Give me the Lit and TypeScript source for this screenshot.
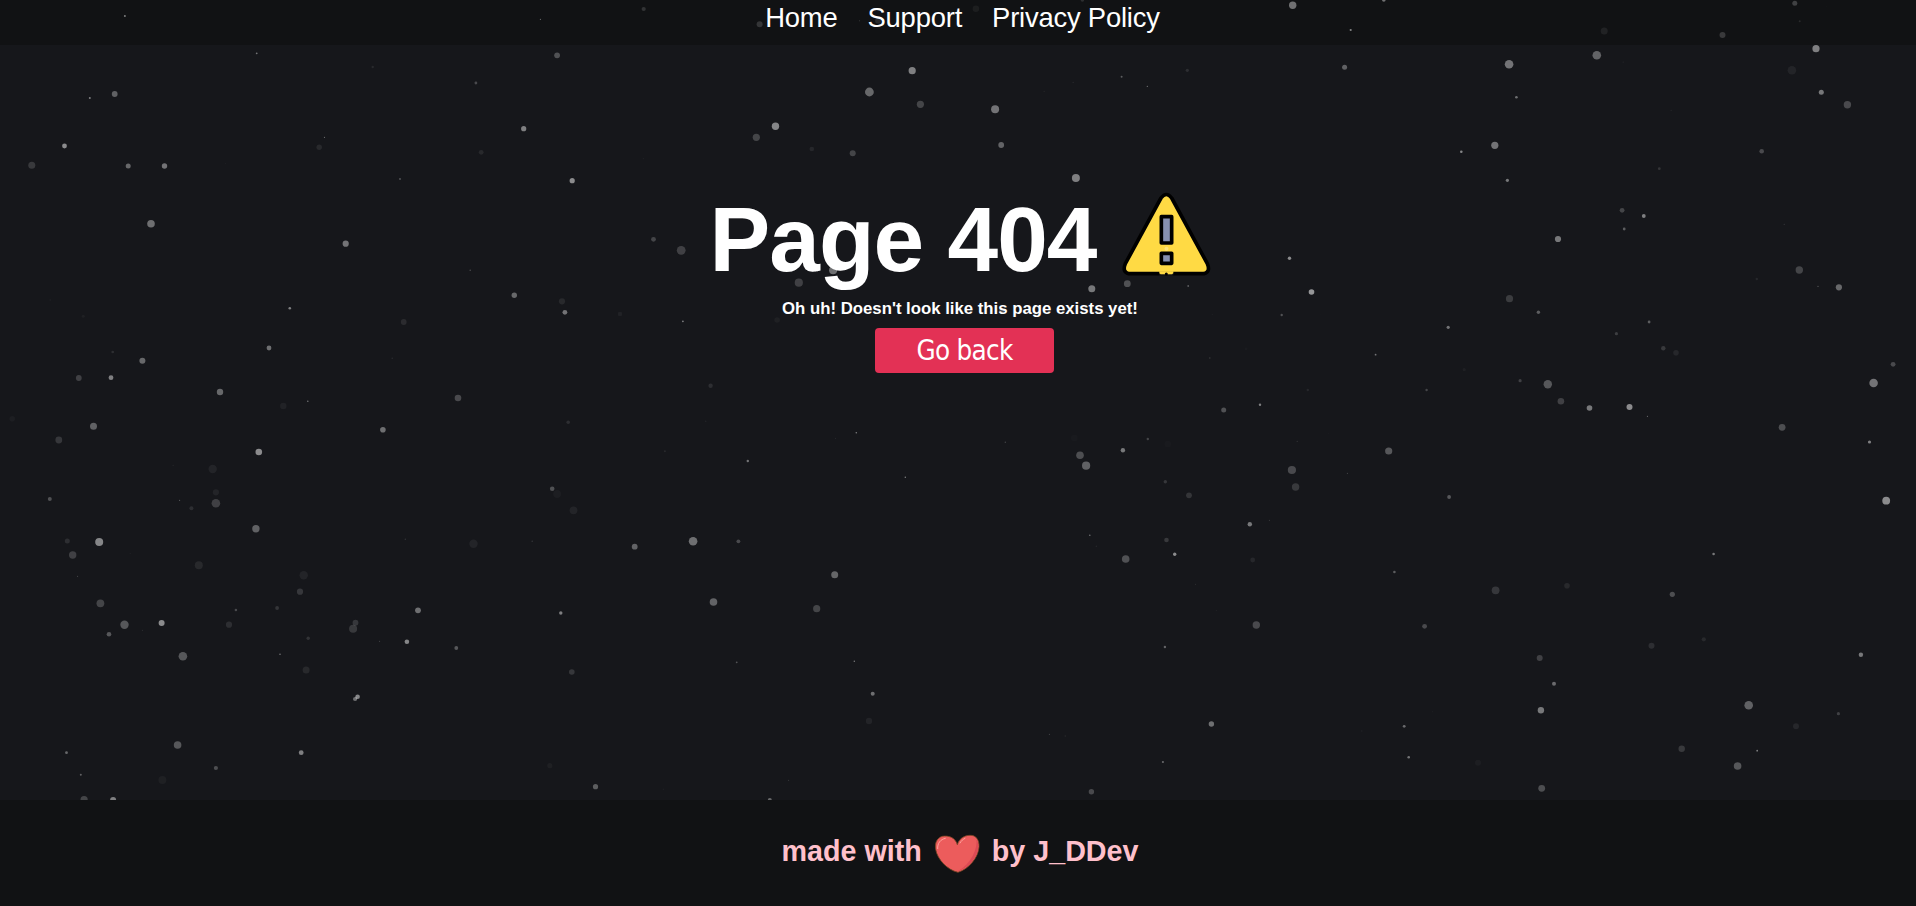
import { LitElement, html, svg, css } from "lit";
import { customElement } from "lit/decorators.js";

/** x and y in sector units, radius in px, opacity in percent. */
type Star = [number, number, number, number];

/** The sky is stored in six sectors, each with its own origin in px. */
interface Sector {
  x: number;
  y: number;
  stars: Star[];
}

const UNIT_X = 2.45;
const UNIT_Y = 3;

const SECTORS: Sector[] = [
  {
    x: 0,
    y: 0,
    stars: [
      [306, 48, 1, 45], [1324, 58, 0.6, 40], [629, 160, 0.9, 40], [913, 201, 1.2, 8], [1365, 166, 2.9, 25],
      [1166, 249, 1.4, 22], [281, 282, 2.9, 32], [220, 294, 1, 45], [1283, 386, 2.6, 45], [158, 438, 2.4, 50],
      [795, 412, 0.6, 40], [782, 442, 2.7, 8], [1179, 457, 2.4, 8], [78, 496, 3.5, 15], [314, 498, 2.5, 35],
      [403, 498, 2.7, 40], [553, 490, 0.6, 4], [980, 537, 0.9, 28], [1402, 542, 2.6, 50], [370, 671, 3.8, 38],
      [847, 731, 3.1, 40], [1152, 811, 0.7, 25], [123, 900, 0.9, 3], [204, 949, 1.5, 4], [710, 925, 1.3, 45],
      [1260, 886, 2.7, 35], [1377, 904, 3.1, 8], [1384, 937, 2.4, 40], [1519, 942, 2.2, 5], [989, 966, 2.9, 9],
      [659, 1044, 2.4, 38], [276, 1056, 1.3, 10], [349, 1082, 3, 35], [961, 1075, 0.7, 10], [193, 1134, 2.9, 18],
      [272, 1133, 2.4, 45], [539, 1176, 3.2, 35], [1122, 1194, 3.3, 22],
    ],
  },
  {
    x: 640,
    y: 0,
    stars: [
      [9, 27, 2.1, 14], [293, 73, 3, 15], [823, 26, 3.3, 5], [538, 62, 0.5, 20], [583, 62, 2.9, 10],
      [1084, 0, 1.8, 12], [667, 212, 3.6, 45], [562, 276, 4.4, 35], [687, 313, 3.6, 20], [870, 328, 4, 40],
      [332, 379, 3.7, 48], [285, 412, 3.6, 20], [421, 447, 2.3, 7], [521, 460, 3, 20], [885, 435, 2.9, 33],
      [1341, 211, 1.6, 10], [1180, 230, 1, 30], [1243, 259, 0.6, 45], [1061, 247, 0.5, 14], [990, 274, 0.5, 10],
      [1068, 534, 4, 45], [33, 718, 2.4, 20], [101, 751, 4.4, 18], [389, 848, 4.1, 18], [473, 811, 4, 38],
      [1107, 866, 3.5, 42], [1194, 851, 3.4, 25], [1343, 858, 0.9, 30], [1290, 746, 2, 30], [105, 964, 0.9, 45],
      [336, 960, 2.8, 4], [8, 476, 0.6, 5], [1402, 943, 0.5, 6], [1485, 1046, 1.5, 2], [1396, 1074, 0.8, 15],
      [173, 1157, 2.2, 10], [886, 932, 2.5, 25],
    ],
  },
  {
    x: 1276,
    y: 0,
    stars: [
      [41, 16, 3.7, 40], [264, 0, 1.8, 40], [183, 90, 1.1, 48], [804, 93, 3.5, 7], [1094, 105, 3, 17],
      [1271, 10, 2.5, 20], [1283, 64, 1, 10], [1348, 20, 0.5, 3], [571, 193, 4.3, 40], [786, 166, 4.3, 33],
      [1323, 146, 3.6, 45], [168, 202, 2.5, 32], [851, 187, 1, 3], [1264, 211, 4.3, 6], [589, 292, 1.3, 38],
      [1336, 277, 2.5, 42], [1400, 314, 3.7, 22], [968, 331, 0.5, 10], [536, 436, 3.6, 40], [454, 455, 1.3, 48],
      [1190, 454, 2.3, 22], [939, 506, 1.4, 13], [567, 541, 1.6, 42], [848, 631, 2.4, 20], [901, 648, 1.9, 45],
      [853, 687, 1.4, 30], [691, 717, 3.1, 42], [1245, 673, 0.5, 20], [33, 775, 1.7, 50], [1282, 810, 3.7, 20],
      [1178, 837, 1.2, 7], [1328, 859, 0.5, 45], [1379, 862, 3.1, 35], [87, 876, 2.8, 55], [572, 896, 3.6, 16],
      [643, 937, 1.7, 30], [14, 945, 1.2, 25], [110, 942, 0.6, 3], [422, 982, 1.6, 40], [914, 966, 1.4, 30],
      [834, 1001, 1.6, 17], [244, 1064, 0.9, 40], [949, 1045, 2.2, 15], [980, 1058, 2.8, 7], [461, 1109, 1.6, 4],
      [1512, 1093, 2.4, 22], [1464, 1149, 4.3, 40], [666, 1153, 4.2, 28], [598, 1142, 1.6, 18], [78, 1170, 1.2, 7],
      [369, 1170, 1.2, 20],
    ],
  },
  {
    x: 0,
    y: 400,
    stars: [
      [754, 4, 0.8, 40], [694, 18, 3.2, 5], [30, 56, 2.8, 3], [229, 79, 3.5, 32], [144, 120, 3.4, 14],
      [938, 89, 2.8, 38], [1392, 67, 1.8, 10], [634, 156, 3.3, 50], [521, 207, 4.2, 6], [424, 196, 0.5, 10],
      [529, 277, 3.1, 6], [529, 310, 4.3, 18], [469, 325, 2, 10], [440, 301, 0.6, 30], [122, 297, 2, 25],
      [1353, 266, 2.3, 25], [1365, 282, 3.9, 3], [1405, 331, 3.9, 6], [627, 386, 3.7, 32], [243, 426, 4, 48],
      [165, 423, 2.5, 10], [178, 465, 3.7, 18], [319, 460, 0.6, 5], [190, 529, 0.5, 28], [993, 418, 0.7, 13],
      [1160, 431, 4.2, 6], [1304, 424, 0.8, 13], [1555, 440, 2.9, 33], [487, 496, 4, 8], [744, 526, 4.2, 6],
      [735, 575, 3.1, 14], [679, 624, 1.9, 13], [246, 610, 3.9, 20], [578, 630, 1.3, 22], [561, 674, 3.1, 10],
      [305, 674, 4.2, 28], [396, 669, 3, 50], [349, 691, 0.6, 10], [267, 703, 2.3, 28], [871, 668, 2.9, 14],
      [865, 686, 4, 15], [1024, 631, 2.9, 38], [1374, 639, 1.7, 45], [997, 725, 2.3, 48], [930, 724, 0.5, 25],
      [1118, 744, 1.9, 28], [755, 715, 1.7, 12], [686, 763, 0.8, 40], [448, 769, 4.3, 28], [750, 810, 3.5, 8],
      [1401, 816, 2.8, 14], [876, 890, 2.3, 48], [870, 897, 2.1, 38], [435, 1035, 3.8, 28], [163, 1058, 1.4, 35],
      [738, 1058, 2.4, 45], [529, 1104, 2.1, 24], [198, 1124, 1, 32], [398, 1140, 4, 4], [1347, 1097, 2.6, 4],
      [1459, 1160, 2.6, 30], [206, 1199, 3.6, 20], [277, 1200, 3, 45],
    ],
  },
  {
    x: 640,
    y: 400,
    stars: [
      [1430, 30, 2.5, 25], [1519, 14, 1.2, 45], [161, 64, 0.8, 6], [479, 115, 0.5, 10], [61, 154, 1, 8],
      [264, 183, 1.2, 40], [530, 98, 0.8, 45], [650, 232, 0.7, 48], [895, 127, 0.7, 20], [1064, 114, 3.5, 1.5],
      [1293, 132, 3.5, 1.5], [1244, 117, 1.2, 20], [1183, 151, 2.2, 42], [1078, 166, 3.8, 24], [1093, 197, 4.1, 32],
      [1287, 245, 1.7, 14], [1345, 286, 2.9, 13], [1494, 373, 2.2, 42], [1542, 361, 0.6, 15], [1102, 406, 0.8, 40],
      [1290, 420, 2.3, 15], [1118, 439, 0.7, 8], [1310, 463, 1.7, 50], [1190, 477, 3.8, 25], [1501, 480, 2.4, 7],
      [130, 424, 4.3, 38], [241, 424, 1.9, 22], [477, 524, 3.5, 34], [180, 606, 3.8, 33], [433, 626, 3.6, 20],
      [1361, 553, 0.5, 12], [1412, 631, 0.6, 6], [1510, 675, 3.7, 22], [1286, 741, 1.2, 33], [237, 787, 0.9, 26],
      [525, 784, 0.7, 45], [570, 881, 2, 38], [561, 963, 3.2, 6], [1400, 972, 2.7, 38], [1003, 1003, 0.6, 20],
      [1042, 1008, 0.8, 7], [1281, 1086, 1.1, 35], [364, 1141, 0.6, 14], [57, 1168, 0.7, 4], [318, 1200, 2, 35],
      [1106, 1175, 2.7, 22],
    ],
  },
  {
    x: 1276,
    y: 400,
    stars: [
      [698, 4, 3.3, 18], [768, 24, 2.8, 42], [866, 21, 3, 50], [910, 49, 0.5, 50], [1240, 82, 3.4, 24],
      [1454, 126, 1.6, 45], [52, 124, 0.6, 14], [129, 100, 0.5, 3], [276, 153, 3.6, 28], [39, 210, 4.1, 22],
      [48, 261, 3.7, 15], [175, 220, 0.6, 20], [424, 291, 1.9, 28], [1495, 302, 3.9, 50], [1072, 462, 1.3, 42],
      [290, 516, 1.3, 30], [538, 571, 3.9, 14], [713, 557, 2.8, 8], [971, 583, 2.6, 24], [364, 679, 2.4, 22],
      [646, 774, 3, 18], [681, 851, 2, 36], [649, 931, 3.2, 42], [920, 737, 3, 10], [1048, 718, 2.1, 8],
      [1433, 764, 2.2, 42], [1158, 916, 4.3, 32], [1378, 941, 1.6, 18], [1274, 979, 3, 7], [994, 1046, 3.2, 15],
      [1179, 1052, 0.9, 45], [1131, 1098, 3.8, 28], [383, 935, 0.5, 6], [314, 979, 1.4, 36], [325, 1072, 1.3, 40],
      [210, 993, 1, 3], [495, 1088, 3, 3], [651, 1165, 3.4, 24],
    ],
  },
];

@customElement("star-field")
export class StarField extends LitElement {
  static styles = css`
    :host {
      display: block;
      overflow: hidden;
    }
    .sky {
      display: block;
      fill: #fff;
    }
  `;

  render() {
    return html`<svg class="sky" width="1916" height="800" viewBox="0 0 1916 800" aria-hidden="true">
      ${SECTORS.map((s) =>
        s.stars.map(
          ([x, y, r, a]) =>
            svg`<circle cx=${(s.x + x / UNIT_X).toFixed(1)} cy=${(s.y + y / UNIT_Y).toFixed(1)} r=${r} fill-opacity=${a / 100}></circle>`,
        ),
      )}
    </svg>`;
  }
}

@customElement("app-root")
export class AppRoot extends LitElement {
  static styles = css`
    :host {
      display: flex;
      flex-direction: column;
      position: relative;
      height: 100vh;
      overflow: hidden;
      background: #16171b;
      color: #fff;
      font-family: "Liberation Sans", Arial, sans-serif;
    }
    .nav {
      display: flex;
      justify-content: center;
      gap: 30px;
      height: 43px;
      padding: 2px 0 0 9px;
      background: #111214;
      font-size: 27.4px;
      line-height: 31px;
    }
    .nav a {
      color: inherit;
      text-decoration: none;
      letter-spacing: -0.2px;
    }
    .main {
      flex: 1;
      display: flex;
      flex-direction: column;
      align-items: center;
      padding-top: 145px;
    }
    .title {
      display: flex;
      align-items: flex-start;
      gap: 23px;
      margin: 0 0 0 6px;
      font-size: 91px;
      letter-spacing: -0.95px;
      line-height: 100px;
      height: 110px;
    }
    .warning {
      width: 93px;
      height: 88px;
    }
    .message {
      margin: 0 0 0 4px;
      font-size: 16.75px;
      line-height: 18px;
      font-weight: bold;
    }
    .back {
      margin: 10px 0 0 13px;
      width: 179px;
      height: 45px;
      padding: 0;
      border: 0;
      border-radius: 4px;
      background: #e33155;
      color: #fff;
      font: 27.5px/45px "DejaVu Sans Condensed", Tahoma, sans-serif;
      letter-spacing: -0.7px;
    }
    .stars {
      position: absolute;
      inset: 0 0 106px 0;
      pointer-events: none;
    }
    .footer {
      display: flex;
      justify-content: center;
      height: 106px;
      box-sizing: border-box;
      padding: 35px 0 0 4px;
      background: #111214;
      color: #ffc0cb;
      font-size: 28.7px;
      font-weight: bold;
      line-height: 33px;
    }
    .heart {
      width: 46px;
      height: 40px;
      margin: -1px 12px 0 12px;
    }
  `;

  render() {
    return html`
      <nav class="nav">
        <a href="#">Home</a>
        <a href="#">Support</a>
        <a href="#">Privacy Policy</a>
      </nav>
      <main class="main">
        <h1 class="title">
          <span>Page 404</span>
          <svg class="warning" viewBox="60 30 279 264" aria-hidden="true">
            <path
              d="M183 54Q199 33 215 54L322 251Q332 276 312 281H86Q66 276 76 251Z"
              fill="#ffda44"
              stroke="#000"
              stroke-width="11"
              stroke-linejoin="round"
            />
            <path d="M178 287v-8h42v8z" fill="#16171b" />
            <path d="M178 274h42v6l-4 3h-34l-4-3z" fill="#ffda44" />
            <circle cx="199" cy="282" r="4.5" />
            <rect x="184" y="110" width="31" height="79" fill="#8690b0" stroke="#000" stroke-width="11" stroke-linejoin="round" />
            <rect x="184" y="220" width="31" height="30" fill="#8690b0" stroke="#000" stroke-width="11" stroke-linejoin="round" />
          </svg>
        </h1>
        <p class="message">Oh uh! Doesn't look like this page exists yet!</p>
        <button class="back">Go back</button>
      </main>
      <footer class="footer">
        <span>made with</span>
        <svg class="heart" viewBox="492 135 138 120" aria-hidden="true">
          <path
            d="M562 167C556 145 535 139 517 142C500 147 494 163 497 181C502 211 532 243 564 250C597 239 625 206 627 173C628 152 617 138 600 139C580 139 566 152 562 167Z"
            fill="#ec5c5c"
            stroke="#7a4424"
            stroke-width="2.5"
          />
          <path d="M619 151C624 190 592 233 563 247C595 238 624 204 625 174C625 164 623 156 619 151Z" fill="#dc4a55" />
          <path d="M503 179C502 163 511 151 526 148" fill="none" stroke="#ffa49d" stroke-width="3" stroke-linecap="round" />
          <path d="M570 162C574 155 579 151 585 148" fill="none" stroke="#ffa49d" stroke-width="3" stroke-linecap="round" />
        </svg>
        <span>by J_DDev</span>
      </footer>
      <star-field class="stars"></star-field>
    `;
  }
}
